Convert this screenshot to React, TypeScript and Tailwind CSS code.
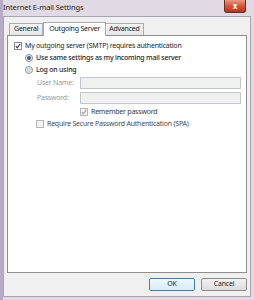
import React from "react";

const font = { fontFamily: '"Noto Sans", "Open Sans", sans-serif' };

function Check({ checked, disabled }: { checked?: boolean; disabled?: boolean }) {
  return (
    <svg width="8" height="8" viewBox="0 0 8 8" className="shrink-0">
      <rect x="0.5" y="0.5" width="7" height="7" fill={disabled ? "#f4f4f4" : "#ffffff"} stroke={disabled ? "#b5b5b5" : "#8a8a8a"} />
      {checked && (
        <path d="M1.8 4.2 L3.3 5.8 L6.2 1.8" fill="none" stroke={disabled ? "#9a9a9a" : "#2a3a50"} strokeWidth="1.1" />
      )}
    </svg>
  );
}

function Radio({ on }: { on?: boolean }) {
  return (
    <svg width="8" height="8" viewBox="0 0 8 8" className="shrink-0">
      <circle cx="4" cy="4" r="3.5" fill="#eef0f2" stroke="#8a8e94" />
      {on && <circle cx="4" cy="4" r="2" fill="#2f5f95" />}
      {!on && <circle cx="4" cy="4" r="2.4" fill="#d6d9dd" />}
    </svg>
  );
}

export default function App() {
  return (
    <div className="w-[254px] h-[300px] bg-[#e0dae4] border-l-[3px] border-[#b9aac6] flex flex-col overflow-hidden text-[7px] tracking-[-0.22px] text-[#1e1e1e]" style={font}>
      <div className="h-[16px] flex items-start justify-between shrink-0">
        <div className="pt-[2px] text-[7.5px] tracking-[-0.1px] text-[#222]">Internet E-mail Settings</div>
        <div className="mr-[8px] w-[22px] h-[13px] bg-gradient-to-b from-[#e69a82] via-[#d2553c] to-[#b8321c] border border-t-0 border-[#7a2818] rounded-b-[3px] flex items-center justify-center text-white text-[8px] font-bold leading-none">
          x
        </div>
      </div>
      <div className="flex-1 mr-[3px] mb-[3px] bg-[#f0f0f0] border border-[#a8a4ac] flex flex-col">
        <div className="h-[18px] flex items-end pl-[5px] shrink-0">
          <div className="h-[12px] px-[4px] border border-b-0 border-[#acacac] bg-gradient-to-b from-[#f4f4f4] to-[#e6e6e6] flex items-center text-[#222]">General</div>
          <div className="h-[14px] px-[5px] border border-b-0 border-[#acacac] bg-white flex items-center relative top-[1px] text-[#222]">Outgoing Server</div>
          <div className="h-[12px] px-[3px] border border-b-0 border-l-0 border-[#acacac] bg-gradient-to-b from-[#f4f4f4] to-[#e6e6e6] flex items-center text-[#222]">Advanced</div>
        </div>
        <div className="ml-[3px] mr-[3px] h-[238px] bg-white border border-[#8e8f8f] flex flex-col pt-[6px]">
          <div className="flex items-center gap-[3px] pl-[6px] h-[8px]">
            <Check checked />
            <span>My outgoing server (SMTP) requires authentication</span>
          </div>
          <div className="flex items-center gap-[3px] pl-[17px] h-[8px] mt-[4px]">
            <Radio on />
            <span className="font-medium">Use same settings as my incoming mail server</span>
          </div>
          <div className="flex items-center gap-[3px] pl-[17px] h-[8px] mt-[4px]">
            <Radio />
            <span className="font-medium">Log on using</span>
          </div>
          <div className="flex items-center pl-[29px] mt-[3px]">
            <span className="w-[43px] text-[#9a9a9a]">User Name:</span>
            <div className="w-[161px] h-[12px] bg-[#f0f0f0] border border-[#c3c6ca]"></div>
          </div>
          <div className="flex items-center pl-[29px] mt-[3px]">
            <span className="w-[43px] text-[#9a9a9a]">Password:</span>
            <div className="w-[161px] h-[12px] bg-[#f0f0f0] border border-[#c3c6ca]"></div>
          </div>
          <div className="flex items-center gap-[3px] pl-[72px] h-[8px] mt-[4px]">
            <Check checked disabled />
            <span className="text-[#3a3a3a]">Remember password</span>
          </div>
          <div className="flex items-center gap-[3px] pl-[28px] h-[8px] mt-[4px]">
            <Check disabled />
            <span className="text-[#4a4a4a]">Require Secure Password Authentication (SPA)</span>
          </div>
        </div>
        <div className="flex justify-end gap-[6px] mr-[3px] mt-[5px]">
          <div className="w-[46px] h-[13px] border border-[#3c7fb1] rounded-[2px] bg-gradient-to-b from-[#f0f7fc] to-[#d9ecf8] flex items-center justify-center">OK</div>
          <div className="w-[46px] h-[13px] border border-[#8d8d8d] rounded-[2px] bg-gradient-to-b from-[#f2f2f2] to-[#dcdcdc] flex items-center justify-center">Cancel</div>
        </div>
      </div>
    </div>
  );
}
